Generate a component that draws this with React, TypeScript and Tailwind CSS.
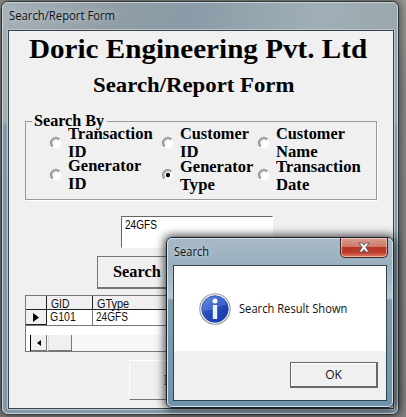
import React from 'react';

const serif = "font-['Liberation_Serif',serif] font-bold";
const ui = "font-['Open_Sans',sans-serif]";

type OptionProps = { lines: [string, string]; checked?: boolean; width: string; first: string; pad?: string };

function Option({ lines, checked = false, width, first, pad = 'pt-[2px]' }: OptionProps) {
  return (
    <div className={`flex shrink-0 ${width}`}>
      <svg className="mt-[12px] h-[12px] w-[12px] shrink-0" viewBox="0 0 12 12">
        <circle cx="6" cy="6" r="5.2" fill="#fff" />
        <path d="M2.2 9.8A5.3 5.3 0 0 1 9.5 2" fill="none" stroke="#888" strokeWidth="1.1" />
        <path d="M2.8 9A4.4 4.4 0 0 1 9 2.8" fill="none" stroke="#555" strokeWidth=".7" />
        {checked && <circle cx="6" cy="6" r="2.2" fill="#000" />}
      </svg>
      <div className={`ml-[6px] whitespace-nowrap text-[16px] leading-[14px] ${pad} ${serif}`}>
        <div className={`h-[14px] w-max origin-left ${first}`}>{lines[0]}</div>
        <div className="mt-[4px] h-[14px] w-max origin-left scale-x-[1.04]">{lines[1]}</div>
      </div>
    </div>
  );
}

function ResultGrid() {
  return (
    <div className="ml-[16px] mt-[6px] h-[57px] w-[330px] overflow-hidden border border-[#777] bg-white font-['Liberation_Sans',sans-serif] text-[12px] text-[#111]">
      <div className="flex h-[14px] border-b border-[#222] bg-[#f0f0f0] leading-[16px]">
        <div className="w-[21px] border-r border-[#222]" />
        <div className="w-[46px] border-r border-[#222] pl-[4px]"><span className="inline-block origin-left scale-x-[.86]">GID</span></div>
        <div className="grow pl-[4px]"><span className="inline-block origin-left scale-x-[.91]">GType</span></div>
      </div>
      <div className="flex h-[16px] border-b border-[#777] leading-[14px]">
        <div className="flex w-[21px] items-center justify-center border-b border-r border-[#222] bg-[#f0f0f0]">
          <svg className="h-[9px] w-[6px]" viewBox="0 0 6 9"><path d="M0 0 6 4.5 0 9Z" /></svg>
        </div>
        <div className="w-[46px] border-r border-[#777] pl-[3px]"><span className="inline-block origin-left scale-x-[.88]">G101</span></div>
        <div className="grow pl-[3px]"><span className="inline-block origin-left scale-x-[.84]">24GFS</span></div>
      </div>
      <div className="ml-[4px] mt-[9px] flex h-[16px] border-l border-black bg-[#f7f7f7]">
        <div className="flex w-[16px] items-center justify-center border-b border-r border-[#777] bg-[#f0f0f0]">
          <svg className="h-[6px] w-[4px]" viewBox="0 0 4 6"><path d="M4 0 0 3 4 6Z" /></svg>
        </div>
        <div className="ml-px w-[24px] border-b border-l border-r border-b-[#777] border-l-[#ddd] border-r-[#777] bg-[#f0f0f0]" />
      </div>
    </div>
  );
}

function MessageBox() {
  return (
    <div className={`absolute left-[166px] top-[237px] h-[171px] w-[228px] rounded-[6px] border border-[#152028] bg-[linear-gradient(180deg,#a8b9c6_0,#9aafbf_28px,#b9c8d4_60px,#819cae_62px,#6f94ab_100%)] shadow-[0_0_9px_2px_rgba(0,0,0,.7)] ${ui}`}>
      <div className="h-full rounded-[5px] border border-[#d4e2ec] px-[5px]">
        <div className="flex h-[26px] justify-between">
          <div className="ml-px mt-[3px] text-[12px] leading-[19px] text-[#111] [text-shadow:0_0_6px_#dfe8ee]"><span className="inline-block origin-left scale-x-[.92]">Search</span></div>
          <div className="-mr-px -mt-px flex h-[20px] w-[48px] items-center justify-center rounded-b-[5px] border border-t-0 border-[#3d2525] bg-[linear-gradient(180deg,#d9a092_0,#cc7767_45%,#b73626_50%,#bd392a_75%,#db8069_100%)] shadow-[inset_0_0_0_1px_rgba(255,220,210,.6)]">
            <svg className="h-[11px] w-[12px]" viewBox="0 0 12 11">
              <path d="M1 1h3.2L6 3.2 7.8 1H11L7.8 5.3 11 10H7.8L6 7.4 4.2 10H1l3.2-4.7Z" fill="#fff" stroke="#555768" strokeWidth=".9" />
            </svg>
          </div>
        </div>
        <div className="flex h-[136px] w-[214px] flex-col border border-[#30434f] bg-white">
          <div className="flex h-[85px] items-center pl-[25px]">
            <svg className="h-[32px] w-[32px] shrink-0" viewBox="0 0 32 32">
              <defs>
                <linearGradient id="infoBlue" x2="1" y2="1">
                  <stop stopColor="#739be5" /><stop offset=".4" stopColor="#2850c0" /><stop offset="1" stopColor="#1734a4" />
                </linearGradient>
              </defs>
              <circle cx="16" cy="16" r="15.2" fill="#f3f4f5" stroke="#999ea5" strokeWidth="1.1" />
              <circle cx="16" cy="16" r="13.3" fill="url(#infoBlue)" stroke="#2347a2" strokeWidth=".7" />
              <path d="M3 17C4 7 12 2 20 4 25 5 27 9 28 12 21 11 12 20 3 17Z" fill="#6287df" opacity=".45" />
              <circle cx="16" cy="8" r="2.5" fill="#f5f6fc" />
              <path d="M13.8 12h4.4v14h-4.4Z" fill="#edf0fa" />
            </svg>
            <div className="ml-[8px] whitespace-nowrap text-[12px] text-[#111]"><span className="inline-block origin-left scale-x-[.93]">Search Result Shown</span></div>
          </div>
          <div className="flex grow justify-end bg-[#f0f0f0] pr-[8px] pt-[11px]">
            <button className="h-[26px] w-[88px] border border-b-2 border-r-2 border-b-[#686868] border-l-[#666] border-r-[#686868] border-t-[#666] bg-[#f0f0f0] text-[12px] leading-[22px] text-[#111] shadow-[inset_1px_1px_0_#fff]">OK</button>
          </div>
        </div>
      </div>
    </div>
  );
}

export default function App() {
  return (
    <div className="relative h-[417px] w-[406px] overflow-hidden bg-[linear-gradient(180deg,#96968f_0,#858585_20%,#7c7c7c_100%)]">
      <div className="ml-px h-[415px] w-[398px] pt-px">
        <div className="h-[414px] rounded-[7px] border border-[#30383d] bg-[linear-gradient(180deg,transparent_0,transparent_120px,#8499a7_124px,#8499a7_100%),linear-gradient(100deg,#a6b1b7_0,#909da5_24%,#899ba7_40%,#a0afb6_68%,#96a1a6_100%)] shadow-[0_0_7px_1px_rgba(0,0,0,.5)]">
          <div className="h-full rounded-[6px] border border-[#c8d2d6] px-[5px]">
            <div className={`h-[27px] pl-px pt-[4px] text-[12px] leading-[18px] text-[#111] [text-shadow:0_0_7px_#d5dde0] ${ui}`}><span className="inline-block origin-left scale-x-[.94]">Search/Report Form</span></div>
            <div className="h-[379px] w-[386px] rounded-[1px] shadow-[0_0_0_1px_#b9c5cb]">
              <div className="h-full overflow-hidden border border-[#39444b] bg-[#f0f0f0] text-black">
                <h1 className={`ml-[20px] h-[38px] whitespace-nowrap text-[28px] leading-[35px] ${serif}`}><span className="inline-block origin-left scale-x-[1.04]">Doric Engineering Pvt. Ltd</span></h1>
                <h2 className={`ml-[84px] mt-[4px] h-[28px] whitespace-nowrap text-[21px] leading-[24px] ${serif}`}><span className="inline-block origin-left scale-x-[1.085]">Search/Report Form</span></h2>
                <fieldset className="ml-[16px] mt-[12px] h-[87px] w-[352px] border border-[#999] shadow-[1px_1px_0_#fff]">
                  <legend className={`ml-[6px] h-[16px] px-[2px] text-[16px] leading-[15px] ${serif}`}><div className="w-[71px] whitespace-nowrap"><span className="inline-block origin-left scale-x-[1.01]">Search By</span></div></legend>
                  <div className="-mt-[4px] ml-[24px] flex h-[32px]">
                    <Option lines={['Transaction', 'ID']} width="w-[112px]" first="scale-x-[1.04]" />
                    <Option lines={['Customer', 'ID']} width="w-[96px]" first="scale-x-[1.02]" />
                    <Option lines={['Customer', 'Name']} width="w-[110px]" first="scale-x-[1.02]" />
                  </div>
                  <div className="ml-[24px] flex h-[36px]">
                    <Option lines={['Generator', 'ID']} width="w-[112px]" first="scale-x-[1.03]" />
                    <Option lines={['Generator', 'Type']} checked width="w-[96px]" first="scale-x-[1.03]" pad="pt-[3px]" />
                    <Option lines={['Transaction', 'Date']} width="w-[110px]" first="scale-x-[1.04]" pad="pt-[3px]" />
                  </div>
                </fieldset>
                <div className="ml-[112px] mt-[16px] h-[32px] w-[152px] border border-b-white border-l-[#666] border-r-white border-t-[#666] bg-white pl-[3px] font-['Liberation_Sans',sans-serif] text-[12px] leading-[17px]"><span className="inline-block origin-left scale-x-[.84]">24GFS</span></div>
                <button className={`ml-[88px] mt-[8px] block h-[33px] w-[152px] border border-b-2 border-b-[#777] border-l-[#777] border-r-[#777] border-t-[#777] bg-[#f0f0f0] pl-[15px] text-left text-[16px] ${serif}`}><span className="inline-block origin-left scale-x-[1.02]">Search</span></button>
                <ResultGrid />
                <button className={`ml-[120px] mt-[8px] block h-[40px] w-[170px] border border-b-[#777] border-l-[#fff] border-r-[#777] border-t-[#fff] bg-[#f0f0f0] pl-[34px] text-left text-[15px] text-[#493526] ${serif}`}>Exit</button>
              </div>
            </div>
          </div>
        </div>
      </div>
      <MessageBox />
    </div>
  );
}
